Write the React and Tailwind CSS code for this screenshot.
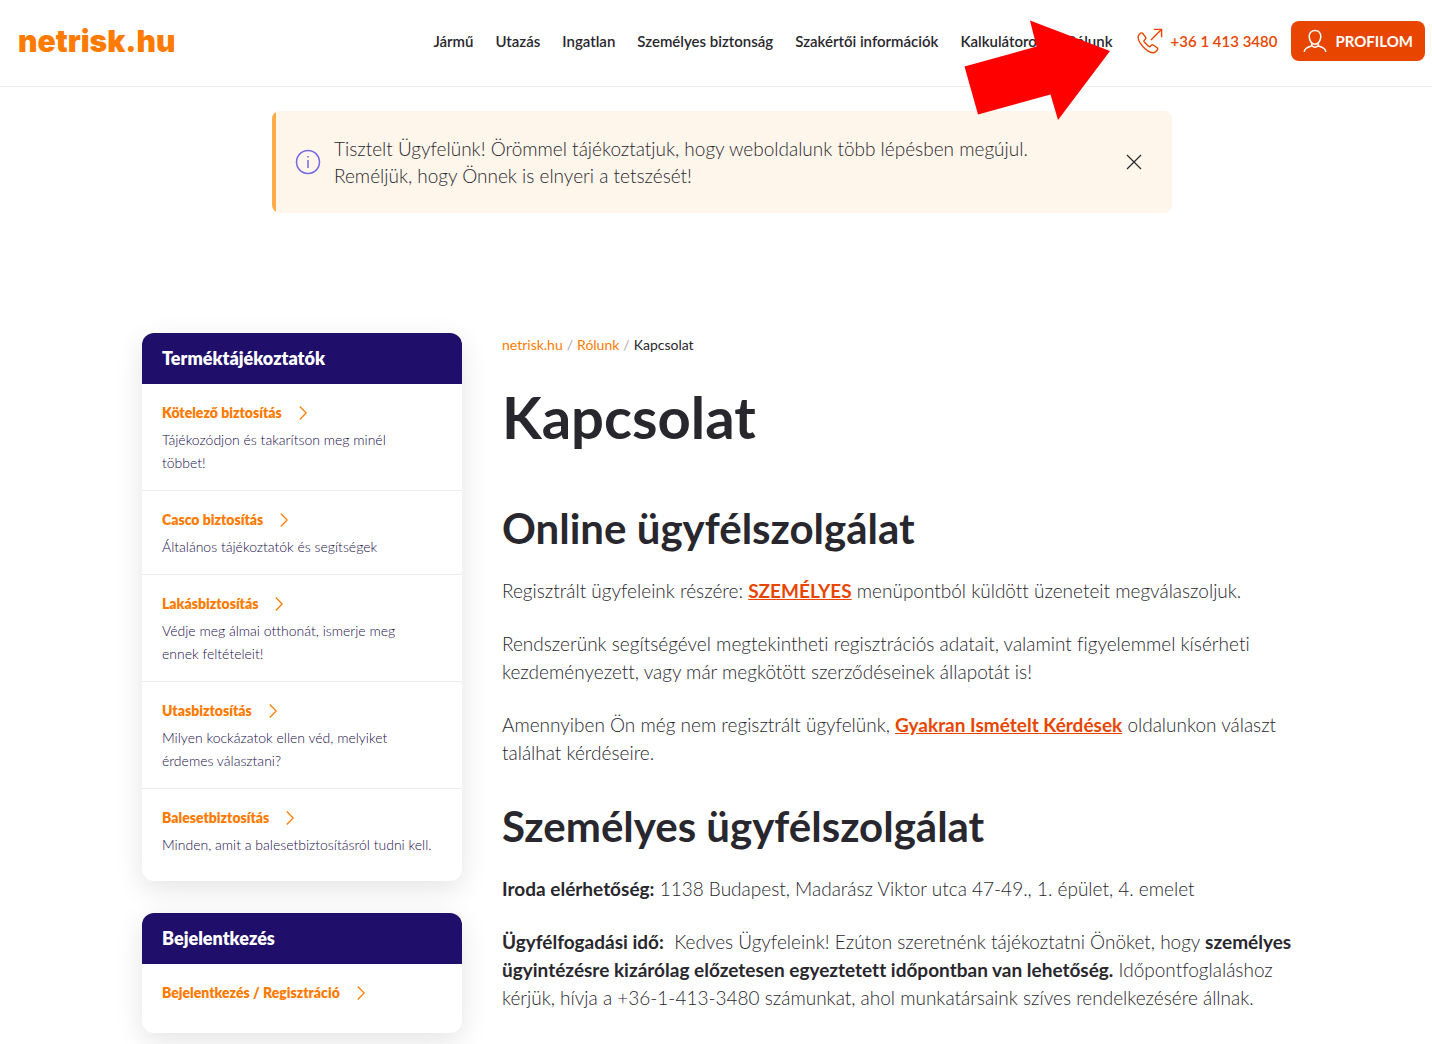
import React, { useState } from "react";

const navItems = [
  "Jármű",
  "Utazás",
  "Ingatlan",
  "Személyes biztonság",
  "Szakértői információk",
  "Kalkulátorok",
  "Rólunk",
];

const products = [
  { title: "Kötelező biztosítás", text: "Tájékozódjon és takarítson meg minél\ntöbbet!" },
  { title: "Casco biztosítás", text: "Általános tájékoztatók és segítségek" },
  { title: "Lakásbiztosítás", text: "Védje meg álmai otthonát, ismerje meg\nennek feltételeit!" },
  { title: "Utasbiztosítás", text: "Milyen kockázatok ellen véd, melyiket\nérdemes választani?" },
  { title: "Balesetbiztosítás", text: "Minden, amit a balesetbiztosításról tudni kell." },
];

const login = [{ title: "Bejelentkezés / Regisztráció", text: "" }];

const Chevron = () => (
  <svg width="8" height="14" viewBox="0 0 8 14" fill="none" stroke="currentColor" strokeWidth="1.3">
    <path d="M0.8 0.5L7.2 7L0.8 13.5" />
  </svg>
);

const PhoneIcon = () => (
  <svg width="26" height="26" viewBox="0 0 26 26" fill="none" stroke="currentColor" strokeWidth="1.4" strokeLinejoin="round">
    <path d="M3.4 5.3L2.2 6.5C0.5 8.3 1 11.6 3.2 15.2C5 18 7.8 20.8 10.8 22.8C14 24.9 17.2 25.1 18.9 23.4L20.1 22.2C20.8 21.5 20.8 20.5 20.1 19.8L16.6 17.2C15.9 16.6 15 16.7 14.4 17.3L13.2 18.5C12.8 18.9 12.3 18.9 11.8 18.5L7.2 13.9C6.8 13.4 6.8 12.9 7.2 12.5L8.3 11.3C8.9 10.7 9 9.9 8.5 9.2L5.8 5.5C5.2 4.7 4.1 4.6 3.4 5.3Z" />
    <path d="M14 12L24.4 1.6M16.8 1.4H24.6V9.2" strokeLinejoin="miter" />
  </svg>
);

const ProfileIcon = () => (
  <svg width="24" height="24" viewBox="0 0 24 24" fill="none" stroke="currentColor" strokeWidth="1.5">
    <path d="M12 1.5C8.4 1.5 6 4 6.2 7.8C6.4 11.8 8.8 15.3 12 15.3C15.2 15.3 17.6 11.8 17.8 7.8C18 4 15.6 1.5 12 1.5Z" />
    <path d="M1.3 23C1.3 20 3.2 18.8 8.8 16.8M22.7 23C22.7 20 20.8 18.8 15.2 16.8" />
    <path d="M8.8 14V16.8C10.6 18.6 13.4 18.6 15.2 16.8V14" />
  </svg>
);

const InfoIcon = () => (
  <svg width="26" height="26" viewBox="0 0 26 26" fill="none" stroke="#7167e8" strokeWidth="1.5">
    <circle cx="13" cy="13" r="11.5" />
    <path d="M13 11V19M13 7V8.6" />
  </svg>
);

const SideCard = ({ title, items }) => (
  <section className="overflow-hidden rounded-xl bg-white shadow-[0_8px_28px_rgba(0,0,0,0.11)]">
    <h2 className="bg-[#200e6b] px-5 py-3 text-[18px] leading-[27px] font-extrabold text-white">{title}</h2>
    <ul>
      {items.map((item) => (
        <li
          key={item.title}
          className="border-b border-[#ececec] px-5 pt-[17px] pb-4 last:border-0 last:pb-[25px]"
        >
          <a href="#" className="flex items-center gap-[17px] text-[14px] leading-6 font-extrabold text-[#ff7b00]">
            {item.title}
            <Chevron />
          </a>
          <p className="mt-[3px] text-[14px] leading-[23px] font-light whitespace-pre-line text-[#200e4b]">{item.text}</p>
        </li>
      ))}
    </ul>
  </section>
);

const App = () => {
  const [showNotice, setShowNotice] = useState(true);

  return (
    <div className="overflow-x-clip bg-white pb-8 font-['Lato',sans-serif] text-[#29272e] [font-variant-ligatures:none]">
      <header className="relative flex items-center justify-between border-b border-[#ececec] pt-[21px] pr-[7px] pb-[25px] pl-[18px]">
        <a href="#" className="font-['Inter',sans-serif] text-[30px] leading-10 font-black text-[#ff7b00]">
          netrisk.hu
        </a>
        <div className="flex items-center">
          <nav className="flex gap-[22px] text-[15px] leading-5 font-semibold">
            {navItems.map((item) => (
              <a key={item} href="#">
                {item}
              </a>
            ))}
          </nav>
          <a href="#" className="ml-6 flex items-center gap-2 text-[15px] font-semibold text-[#e84600]">
            <PhoneIcon />
            +36 1 413 3480
          </a>
          <button className="ml-3.5 flex h-10 items-center gap-2 rounded-lg bg-[#e84600] px-3 text-[15px] font-bold text-white">
            <ProfileIcon />
            PROFILOM
          </button>
        </div>
        {/* red pointer over the menu */}
        <svg
          className="pointer-events-none absolute top-5 right-[322px] z-10"
          width="146"
          height="100"
          viewBox="0 0 146 100"
          fill="#ff0000"
        >
          <path d="M66 0.5L146 31L94 100L86.5 74.5L14 94.5L0.5 46.5L72.5 26.5Z" />
        </svg>
      </header>

      {showNotice && (
        <div className="mt-6 pl-3">
          <div className="relative mx-auto flex max-w-[900px] items-center overflow-hidden rounded-lg bg-[#fff6eb] py-6 pr-[30px] pl-[23px] before:absolute before:inset-y-0 before:left-0 before:w-1 before:bg-[#ffab4a]">
            <InfoIcon />
            <p className="ml-[13px] text-[19px] leading-[27px] font-light">
              Tisztelt Ügyfelünk! Örömmel tájékoztatjuk, hogy weboldalunk több lépésben megújul.
              <br />
              Reméljük, hogy Önnek is elnyeri a tetszését!
            </p>
            <button aria-label="Bezárás" className="ml-auto" onClick={() => setShowNotice(false)}>
              <svg width="16" height="16" viewBox="0 0 16 16" stroke="#29272e" strokeWidth="1.2">
                <path d="M1 1L15 15M15 1L1 15" />
              </svg>
            </button>
          </div>
        </div>
      )}

      <div className="mx-auto mt-[120px] flex max-w-[1148px] items-start gap-10">
        <aside className="flex w-80 shrink-0 flex-col gap-8">
          <SideCard title="Terméktájékoztatók" items={products} />
          <SideCard title="Bejelentkezés" items={login} />
        </aside>

        <main className="-mr-4 min-w-0 flex-1">
          <nav className="flex gap-1 text-[14px] leading-6">
            <a href="#" className="text-[#ff7b00]">netrisk.hu</a>
            <span className="text-[#aaaaaa]">/</span>
            <a href="#" className="text-[#ff7b00]">Rólunk</a>
            <span className="text-[#aaaaaa]">/</span>
            <span>Kapcsolat</span>
          </nav>
          <h1 className="mt-6 text-[58px] leading-[72px] font-bold">Kapcsolat</h1>
          <h2 className="mt-[50px] text-[42px] leading-[50px] font-bold">Online ügyfélszolgálat</h2>
          <div className="mt-6 flex flex-col gap-[25px] text-[19px] leading-7 font-light">
            <p>
              Regisztrált ügyfeleink részére:{" "}
              <a href="#" className="font-bold text-[#e84600] underline">SZEMÉLYES</a> menüpontból küldött
              üzeneteit megválaszoljuk.
            </p>
            <p>
              Rendszerünk segítségével megtekintheti regisztrációs adatait, valamint figyelemmel kísérheti
              kezdeményezett, vagy már megkötött szerződéseinek állapotát is!
            </p>
            <p>
              Amennyiben Ön még nem regisztrált ügyfelünk,{" "}
              <a href="#" className="font-bold text-[#e84600] underline">Gyakran Ismételt Kérdések</a>{" "}
              oldalunkon választ találhat kérdéseire.
            </p>
          </div>
          <h2 className="mt-[34px] text-[42px] leading-[50px] font-bold">Személyes ügyfélszolgálat</h2>
          <div className="mt-6 flex flex-col gap-[25px] text-[19px] leading-7 font-light">
            <p>
              <strong className="font-bold">Iroda elérhetőség:</strong> 1138 Budapest, Madarász Viktor utca 47-49., 1. épület, 4. emelet
            </p>
            <p>
              <strong className="font-bold">Ügyfélfogadási idő:</strong>&nbsp; Kedves Ügyfeleink! Ezúton szeretnénk tájékoztatni
              Önöket, hogy{" "}
              <strong className="font-bold">
                személyes ügyintézésre kizárólag előzetesen egyeztetett időpontban van lehetőség.
              </strong>{" "}
              Időpontfoglaláshoz kérjük, hívja a +36-1-413-3480 számunkat, ahol munkatársaink szíves
              rendelkezésére állnak.
            </p>
          </div>
        </main>
      </div>
    </div>
  );
};

export default App;
